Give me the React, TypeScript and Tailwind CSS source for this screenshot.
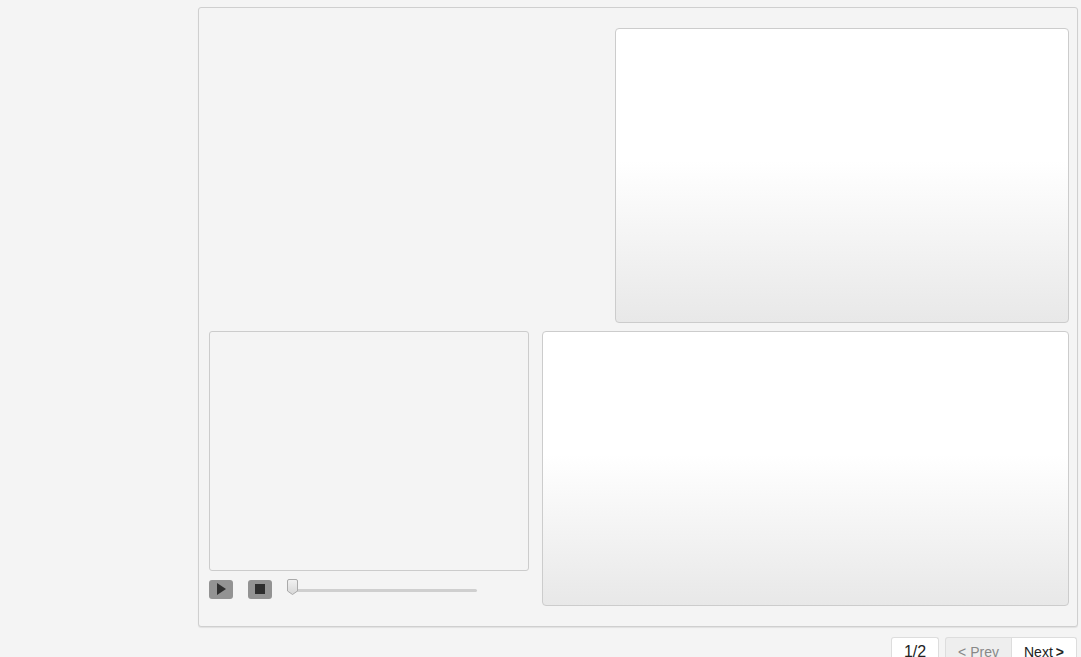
import React from "react";

export default function App() {
  return (
    <div className="min-h-[657px] w-full bg-[#f4f4f4]" style={{ fontFamily: '"Liberation Sans", Arial, sans-serif' }}>
      <div className="pl-[198px] pt-[7px]">
        <div className="w-[880px] h-[620px] border border-[#cfcfcf] rounded-[3px] bg-[#f4f4f4] shadow-[0_1px_1px_rgba(0,0,0,0.08)] pl-[10px] pr-[8px] pt-[20px]">
          <div className="flex justify-end">
            <div className="w-[454px] h-[295px] border border-[#cccccc] rounded-[4px] bg-[linear-gradient(to_bottom,#ffffff_45%,#e8e8e8_100%)]" />
          </div>
          <div className="flex gap-[13px] mt-[8px]">
            <div className="flex flex-col">
              <div className="w-[320px] h-[240px] border border-[#cccccc] rounded-[3px] bg-[#f4f4f4]" />
              <div className="flex items-center mt-[8px] h-[20px]">
                <div className="w-[24px] h-[19px] rounded-[3px] bg-[#939393] flex items-center justify-center">
                  <svg width="10" height="12" viewBox="0 0 10 12"><path d="M1 0 L10 6 L1 12 Z" fill="#2e2e2e" /></svg>
                </div>
                <div className="w-[24px] h-[19px] rounded-[3px] bg-[#939393] flex items-center justify-center ml-[15px]">
                  <div className="w-[10px] h-[10px] bg-[#2e2e2e]" />
                </div>
                <div className="relative ml-[15px] w-[190px] h-[20px]">
                  <div className="absolute left-[3px] right-0 top-[10px] h-[3px] bg-[#cfcfcf] rounded-full" />
                  <svg className="absolute left-0 top-0" width="11" height="16" viewBox="0 0 11 16">
                    <defs>
                      <linearGradient id="tg" x1="0" y1="0" x2="0" y2="1">
                        <stop offset="0" stopColor="#f2f2f2" />
                        <stop offset="1" stopColor="#d6d6d6" />
                      </linearGradient>
                    </defs>
                    <path d="M2 0.5 H9 Q10.5 0.5 10.5 2 V12 L5.5 15.5 L0.5 12 V2 Q0.5 0.5 2 0.5 Z" fill="url(#tg)" stroke="#aaa" strokeWidth="1" />
                  </svg>
                </div>
              </div>
            </div>
            <div className="w-[527px] h-[275px] border border-[#cccccc] rounded-[4px] bg-[linear-gradient(to_bottom,#ffffff_45%,#e8e8e8_100%)]" />
          </div>
        </div>
        <div className="w-[880px] flex justify-end mt-[10px]">
          <div className="h-[20px] w-[48px] border border-[#ddd] border-b-0 rounded-t-[3px] bg-white flex items-start justify-center pt-[5px] text-[16px] leading-[18px] text-[#222] overflow-hidden">1/2</div>
          <div className="flex ml-[6px] mr-[1px]">
            <div className="h-[20px] w-[67px] border border-[#ddd] border-b-0 rounded-tl-[3px] bg-[#eeeeee] flex items-start justify-center pt-[6px] text-[14px] leading-[16px] text-[#888] overflow-hidden">&lt; Prev</div>
            <div className="h-[20px] w-[65px] border border-l-0 border-[#ddd] border-b-0 rounded-tr-[3px] bg-white flex items-start justify-center pt-[6px] text-[14px] leading-[16px] text-[#222] overflow-hidden">Next <span className="font-bold ml-[3px]">&gt;</span></div>
          </div>
        </div>
      </div>
    </div>
  );
}
